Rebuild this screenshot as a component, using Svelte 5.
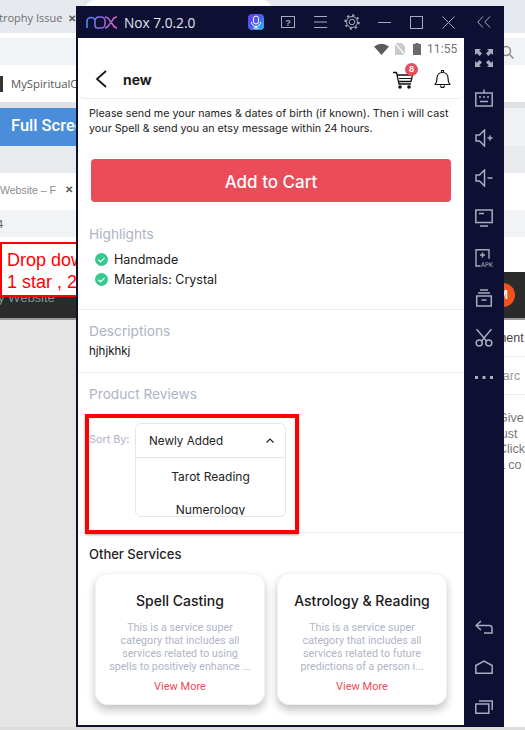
<script>
  const highlights = ['Handmade', 'Materials: Crystal'];
  const services = [
    {
      title: 'Spell Casting',
      lines: ['This is a service super', 'category that includes all', 'services related to using', 'spells to positively enhance ...']
    },
    {
      title: 'Astrology & Reading',
      lines: ['This is a service super', 'category that includes all', 'services related to future', 'predictions of a person i...']
    }
  ];
</script>

<div class="desktop">
  <!-- browser behind the emulator -->
  <div class="browser">
    <div class="tab-strip">
      <span class="tab-title">trophy Issue</span>
      <span class="tab-close">✕</span>
      <div class="active-tab"></div>
    </div>
    <div class="row gap-5"></div>
    <div class="row address">
      <svg class="search" viewBox="0 0 14 14" width="14" height="14"><circle cx="4" cy="6" r="4.500" fill="none" stroke="#8a8d91" stroke-width="1.500" /><path d="M7.500 9.500l4 4" stroke="#8a8d91" stroke-width="1.500" /></svg>
    </div>
    <div class="row bookmarks">
      <span class="favicon"></span>
      <span>MySpiritualC</span>
    </div>
    <div class="row gray-bar"></div>
    <div class="row blue-row"><div class="blue-btn">Full Scree</div></div>
    <div class="row pale"></div>
    <div class="row tab2"><span>Website – F</span><span class="tab-close small">✕</span></div>
    <div class="row num-row"><span>4</span></div>
    <div class="row white-35"></div>
    <div class="row dark-bar">
      <span class="dark-text">y Website</span>
      <span class="orange">M</span>
    </div>
    <div class="lower">
      <div class="lower-left"></div>
      <div class="lower-right">
        <div class="frag f1">ment</div>
        <div class="frag f2">earc</div>
        <div class="frag-body">
          <div>Give</div>
          <div>just</div>
          <div>Click</div>
          <div>a co</div>
        </div>
      </div>
    </div>
    <div class="drop-note">Drop dow<br />1 star , 2</div>
  </div>

  <!-- emulator window -->
  <div class="nox">
    <div class="titlebar">
      <svg class="logo" viewBox="0 0 32 14" width="32" height="14">
        <defs>
          <linearGradient id="noxg" x1="0" x2="1" y1="0" y2="0">
            <stop offset="0" stop-color="#4f8df0" />
            <stop offset="0.5" stop-color="#8d63e0" />
            <stop offset="1" stop-color="#e85fb0" />
          </linearGradient>
        </defs>
        <path d="M1 13V6.500a4 4 0 0 1 8 0V11a2.500 2.500 0 0 0 2.500 2H15a4 4 0 0 0 4-4V6a4 4 0 0 0-4-4h-2.500a4 4 0 0 0-3.500 3M19 2c3 0 4 2 5 4l2 2.500c1 1.500 2 4.500 5 4.500M31 2c-3 0-4 2-5 4l-2 2.500c-1 1.500-2 4.500-5 4.500" fill="none" stroke="url(#noxg)" stroke-width="1.600" />
      </svg>
      <span class="version">Nox 7.0.2.0</span>
      <div class="mic">
        <svg viewBox="0 0 16 16" width="16" height="16"><rect x="5.500" y="2" width="5" height="8" rx="2.500" fill="none" stroke="#fff" stroke-width="1" /><path d="M3.500 8a4.500 4.500 0 0 0 9 0M8 12.500V14M5.500 14h5" fill="none" stroke="#fff" stroke-width="1" /></svg>
      </div>
      <svg class="t-help" viewBox="0 0 14 12" width="14" height="12"><rect x="0.500" y="0.500" width="13" height="11" fill="none" stroke="#a8abbd" /><text x="7" y="9.500" text-anchor="middle" font-size="9" font-weight="700" font-family="Liberation Sans" fill="#a8abbd">?</text></svg>
      <svg class="t-menu" viewBox="0 0 13 12" width="13" height="12"><path d="M0 .5h13M0 6h13M0 11.500h13" stroke="#a8abbd" /></svg>
      <svg class="t-gear" viewBox="0 0 16 16" width="16" height="16"><circle cx="8" cy="8" r="2.800" fill="none" stroke="#a8abbd" /><circle cx="8" cy="8" r="5.500" fill="none" stroke="#a8abbd" stroke-width="1" /><circle cx="8" cy="8" r="6.800" fill="none" stroke="#a8abbd" stroke-width="1.800" stroke-dasharray="2.200 3.140" /></svg>
      <svg class="t-min" viewBox="0 0 13 12" width="13" height="12"><path d="M0 6.500h13" stroke="#a8abbd" /></svg>
      <svg class="t-max" viewBox="0 0 13 13" width="13" height="13"><rect x="0.500" y="0.500" width="12" height="12" fill="none" stroke="#a8abbd" /></svg>
      <svg class="t-close" viewBox="0 0 13 13" width="13" height="13"><path d="M.5.500l12 12M12.500.500l-12 12" stroke="#a8abbd" /></svg>
      <svg class="t-collapse" viewBox="0 0 14 12" width="14" height="12"><path d="M6 .5L.8 6 6 11.500M13 .5L7.800 6 13 11.500" fill="none" stroke="#a8abbd" /></svg>
    </div>

    <div class="nox-body">
      <div class="screen">
        <div class="status">
          <svg viewBox="0 0 15 12" width="15" height="12"><path d="M0 3.500Q7.500-2 15 3.500L7.500 12z" fill="#5a5a5a" /></svg>
          <svg class="sim" viewBox="0 0 10 12" width="10" height="12"><path d="M0 0h6.500L10 3.500V12H0z" fill="#c9c9c9" /><path d="M0 0l10 12" stroke="#fff" stroke-width="1.200" /></svg>
          <svg class="batt" viewBox="0 0 8 12" width="8" height="12"><path d="M2.500 0h3v1H8v11H0V1h2.500z" fill="#6a6a6a" /></svg>
          <span class="clock">11:55</span>
        </div>

        <header class="app-head">
          <svg class="back" viewBox="0 0 12 18" width="12" height="18"><path d="M11 1L2 9l9 8" fill="none" stroke="#1a1a1a" stroke-width="1.800" /></svg>
          <span class="head-title">new</span>
          <div class="cart">
            <svg viewBox="0 0 21 20" width="21" height="20"><path d="M0 3.500h3.500L6 15h12M4 6h15.500l-1.500 6.500H5.500" fill="none" stroke="#111" stroke-width="1.300" /><path d="M6 9.500h12.500" stroke="#111" stroke-width="1" /><circle cx="7" cy="18" r="1.800" fill="#111" /><circle cx="16" cy="18" r="1.800" fill="#111" /></svg>
            <span class="badge">8</span>
          </div>
          <svg class="bell" viewBox="0 0 17 20" width="17" height="20"><path d="M1 15.500c1.500-1.500 2-3 2-6.500 0-3 2-5.500 5.500-5.500S14 6 14 9c0 3.500.5 5 2 6.500z" fill="none" stroke="#111" stroke-width="1.200" stroke-linejoin="round" /><path d="M7.500 3.500V1.500h2v2M6.500 16.500a2 2 0 0 0 4 0" fill="none" stroke="#111" stroke-width="1.100" /></svg>
        </header>

        <p class="intro">Please send me your names &amp; dates of birth (if known). Then i will cast<br />your Spell &amp; send you an etsy message within 24 hours.</p>

        <button class="add-cart">Add to Cart</button>

        <section class="sec highlights">
          <h3 class="label">Highlights</h3>
          <ul>
            {#each highlights as item}
              <li>
                <svg viewBox="0 0 13 13" width="13" height="13"><circle cx="6.500" cy="6.500" r="6.500" fill="#35c98e" /><path d="M3.500 6.800l2.100 2 3.900-4" fill="none" stroke="#fff" stroke-width="1.200" /></svg>
                <span>{item}</span>
              </li>
            {/each}
          </ul>
        </section>

        <section class="sec descriptions">
          <h3 class="label">Descriptions</h3>
          <div class="desc-text">hjhjkhkj</div>
        </section>

        <section class="sec reviews">
          <h3 class="label">Product Reviews</h3>
          <div class="sort-row">
            <span class="sort-label">Sort By:</span>
            <div class="select">
              <div class="select-head">
                <span>Newly Added</span>
                <svg viewBox="0 0 8 5" width="8" height="5"><path d="M.5 4.500L4 1l3.500 3.500" fill="none" stroke="#222" stroke-width="1.200" /></svg>
              </div>
              <div class="options">
                <div class="option">Tarot Reading</div>
                <div class="option">Numerology</div>
              </div>
            </div>
            <div class="annotation"></div>
          </div>
        </section>

        <section class="other">
          <h3 class="other-title">Other Services</h3>
          <div class="cards">
            {#each services as s}
              <div class="card">
                <div class="card-title">{s.title}</div>
                <div class="card-desc">
                  {#each s.lines as line}
                    <div>{line}</div>
                  {/each}
                </div>
                <div class="view-more">View More</div>
              </div>
            {/each}
          </div>
        </section>
      </div>

      <aside class="side">
        <div class="side-item">
          <svg viewBox="0 0 18 18" width="18" height="18"><path d="M0 0h6L4.200 1.800 7 4.600 4.600 7 1.800 4.200 0 6zM18 0v6l-1.800-1.800L13.400 7 11 4.600l2.800-2.800L12 0zM0 18v-6l1.800 1.800L4.600 11 7 13.400l-2.800 2.800L6 18zM18 18h-6l1.800-1.800-2.800-2.800 2.400-2.400 2.800 2.800L18 12z" fill="#a8abbd" /></svg>
        </div>
        <div class="side-item">
          <svg viewBox="0 0 18 18" width="18" height="18"><path d="M9 .5V4M.8 4h16.400v13H.8z" fill="none" stroke="#a8abbd" stroke-width="1.500" /><path d="M4 8h2M8 8h2M12 8h2M5 12.500h8" stroke="#a8abbd" stroke-width="1.500" /></svg>
        </div>
        <div class="side-item">
          <svg viewBox="0 0 18 18" width="18" height="18"><path d="M1 6h3.500L9.500 1v16l-5-5H1z" fill="none" stroke="#a8abbd" stroke-width="1.500" /><path d="M12.500 9h5M15 6.500v5" stroke="#a8abbd" stroke-width="1.500" /></svg>
        </div>
        <div class="side-item">
          <svg viewBox="0 0 18 18" width="18" height="18"><path d="M1 6h3.500L9.500 1v16l-5-5H1z" fill="none" stroke="#a8abbd" stroke-width="1.500" /><path d="M12.500 9h5" stroke="#a8abbd" stroke-width="1.500" /></svg>
        </div>
        <div class="side-item">
          <svg viewBox="0 0 18 18" width="18" height="18"><path d="M.8 1h16.400v12.500H.8z" fill="none" stroke="#a8abbd" stroke-width="1.500" /><path d="M4 4.500h5M5 17h8" stroke="#a8abbd" stroke-width="1.500" /></svg>
        </div>
        <div class="side-item">
          <svg viewBox="0 0 18 18" width="18" height="18"><path d="M5.500 17H1V.8h13v9" fill="none" stroke="#a8abbd" stroke-width="1.400" /><path d="M7.500 3.500v5M5 6h5" stroke="#a8abbd" stroke-width="1.500" /><text x="6" y="17.800" font-size="6.500" font-family="DejaVu Sans Mono" fill="#a8abbd" textLength="12">APK</text></svg>
        </div>
        <div class="side-item">
          <svg viewBox="0 0 18 18" width="18" height="18"><path d="M5 1h8M3 4h12" stroke="#a8abbd" stroke-width="1.400" /><path d="M1.700 7h14.600v10H1.700zM6.500 11h5" fill="none" stroke="#a8abbd" stroke-width="1.500" /></svg>
        </div>
        <div class="side-item">
          <svg viewBox="0 0 18 18" width="18" height="18"><path d="M1.500 0l10 12M16.500 0l-10 12" fill="none" stroke="#a8abbd" stroke-width="1.500" /><circle cx="4.200" cy="14" r="3" fill="none" stroke="#a8abbd" stroke-width="1.500" /><circle cx="13.800" cy="14" r="3" fill="none" stroke="#a8abbd" stroke-width="1.500" /></svg>
        </div>
        <div class="side-item">
          <svg viewBox="0 0 18 4" width="18" height="4"><path d="M0 0h3v3H0zM7.500 0h3v3h-3zM15 0h3v3h-3z" fill="#a8abbd" /></svg>
        </div>

        <div class="side-bottom">
          <div class="side-item">
            <svg viewBox="0 0 18 14" width="18" height="14"><path d="M6 1L1 5.500 6 10M1 5.500h13.500c2 0 2.500 1.500 2.500 3V13H9" fill="none" stroke="#a8abbd" stroke-width="1.500" /></svg>
          </div>
          <div class="side-item">
            <svg viewBox="0 0 18 14" width="18" height="14"><path d="M.8 5.500L9 1l8.200 4.500v7.700H.8z" fill="none" stroke="#a8abbd" stroke-width="1.500" /></svg>
          </div>
          <div class="side-item">
            <svg viewBox="0 0 18 14" width="18" height="14"><path d="M.8 4h13v9.200H.8zM4 1h13.200v9" fill="none" stroke="#a8abbd" stroke-width="1.500" /></svg>
          </div>
        </div>
      </aside>
    </div>
  </div>
</div>

<style>
  :global(body) {
    margin: 0;
    background: #fff;
  }

  .desktop {
    position: relative;
    width: 525px;
    height: 730px;
    overflow: hidden;
    font-family: 'Liberation Sans', sans-serif;
  }

  /* browser behind */
  .browser {
    position: relative;
    display: flex;
    flex-direction: column;
    height: 730px;
    color: #5f6368;
    font-size: 13px;
    background: #dcdcdc;
  }

  .row {
    flex: none;
    display: flex;
    align-items: center;
  }

  .tab-strip {
    position: relative;
    flex: none;
    display: flex;
    align-items: center;
    height: 33px;
    background: #e6e9ed;
    font-family: 'Open Sans', sans-serif;
    font-size: 11px;
  }

  .tab-title {
    margin-left: -1px;
    padding-top: 2px;
    color: #6b6f74;
  }

  .tab-close {
    margin-left: 6px;
    padding-top: 2px;
    font-size: 10px;
    font-weight: 700;
    color: #55585c;
  }

  .active-tab {
    position: absolute;
    left: 85px;
    top: 0;
    width: 187px;
    height: 34px;
    background: #fff;
    border-radius: 10px 10px 0 0;
  }

  .gap-5 {
    height: 5px;
    background: #fff;
  }

  .address {
    height: 27px;
    background: #f1f3f4;
    justify-content: flex-end;
  }

  .search {
    margin-right: 9px;
  }

  .bookmarks {
    height: 37px;
    gap: 8px;
    background: #fff;
    font-family: 'Open Sans', sans-serif;
    font-size: 11.300px;
    color: #555;
    white-space: nowrap;
  }

  .favicon {
    width: 3px;
    height: 16px;
    background: #3a3030;
  }

  .gray-bar {
    height: 6px;
    background: #dfe1e4;
  }

  .blue-row {
    height: 38px;
    background: #eff1f4;
  }

  .blue-btn {
    width: 76px;
    height: 38px;
    padding-left: 11px;
    box-sizing: border-box;
    line-height: 36px;
    background: #4a8ed9;
    color: #fff;
    font-family: Roboto, sans-serif;
    font-size: 16.500px;
    font-weight: 500;
    white-space: nowrap;
    overflow: hidden;
  }

  .pale {
    height: 27px;
    background: #e8eaed;
  }

  .tab2 {
    height: 37px;
    padding-bottom: 4px;
    box-sizing: border-box;
    background: #fff;
    font-size: 10.500px;
    color: #8b8e93;
    white-space: nowrap;
  }

  .tab2 .small {
    position: absolute;
    left: 65px;
    margin: 0;
    padding: 0;
    font-size: 10px;
  }

  .num-row {
    height: 27px;
    background: #f1f3f4;
    font-size: 11px;
    margin-left: 0;
  }

  .num-row span {
    margin-left: -3px;
  }

  .white-35 {
    height: 35px;
    background: #fff;
  }

  .dark-bar {
    position: relative;
    height: 48px;
    background: #2b2b2b;
    border-bottom: 2px solid #9a9a9a;
    box-sizing: border-box;
  }

  .dark-text {
    position: absolute;
    left: -2px;
    top: 18px;
    color: #8d8d8d;
    font-size: 13px;
  }

  .orange {
    position: absolute;
    left: 491px;
    top: 11px;
    width: 24px;
    height: 24px;
    border-radius: 50%;
    background: #f2511b;
    color: #fff;
    font-size: 12px;
    font-weight: 700;
    line-height: 24px;
    text-align: center;
  }

  .lower {
    flex: 1;
    display: flex;
    margin-bottom: 3px;
  }

  .lower-left {
    width: 100px;
    background: #e5e5e5;
  }

  .lower-right {
    flex: 1;
    display: flex;
    flex-direction: column;
    align-items: flex-end;
    background: #fff;
    color: #666;
    font-size: 12.500px;
  }

  .frag {
    box-sizing: border-box;
    width: 100%;
    display: flex;
    align-items: center;
    padding-left: 405px;
    white-space: nowrap;
  }

  .f1 {
    height: 37px;
    border-bottom: 1px solid #eee;
    color: #444;
  }

  .f2 {
    height: 38px;
    border-bottom: 1px solid #eee;
    color: #999;
  }

  .frag-body {
    box-sizing: border-box;
    width: 100%;
    padding-left: 407px;
    padding-top: 16px;
    line-height: 15.700px;
    color: #777;
  }

  .drop-note {
    position: absolute;
    left: 0;
    top: 242px;
    box-sizing: border-box;
    width: 90px;
    height: 55px;
    padding: 5px 0 0 5px;
    border: 2px solid #f00;
    background: #fff;
    color: #f00;
    font-size: 18px;
    line-height: 22px;
    white-space: nowrap;
    overflow: hidden;
  }

  /* emulator */
  .nox {
    position: absolute;
    left: 76px;
    top: 6px;
    width: 428px;
    height: 721px;
    display: flex;
    flex-direction: column;
    background: #0e1033;
  }

  .titlebar {
    position: relative;
    flex: none;
    height: 32px;
    display: flex;
    align-items: center;
  }

  .logo {
    margin-left: 10px;
  }

  .version {
    margin-left: 6px;
    width: 72px;
    color: #e2e4ef;
    font-family: 'Open Sans', sans-serif;
    font-size: 13.700px;
    white-space: nowrap;
  }

  .mic {
    margin-left: 52px;
    width: 16px;
    height: 16px;
    border-radius: 4px;
    background: linear-gradient(135deg, #6a3df0 0%, #4a5cf0 50%, #25c8ee 100%);
  }

  .t-help {
    margin-left: 17px;
  }

  .t-menu {
    margin-left: 19px;
  }

  .t-gear {
    margin-left: 17px;
  }

  .t-min {
    margin-left: 18px;
  }

  .t-max {
    margin-left: 19px;
  }

  .t-close {
    margin-left: 19px;
  }

  .t-collapse {
    margin-left: 22px;
  }

  .nox-body {
    flex: 1;
    display: flex;
    min-height: 0;
  }

  .screen {
    flex: none;
    width: 386px;
    height: 687px;
    margin-left: 2px;
    background: #fff;
    font-family: Inter, sans-serif;
    color: #111;
  }

  .status {
    height: 22px;
    display: flex;
    align-items: center;
    padding-left: 296px;
  }

  .sim {
    margin-left: 6px;
  }

  .batt {
    margin-left: 8px;
  }

  .clock {
    margin-left: 6px;
    font-family: Roboto, sans-serif;
    font-size: 12px;
    letter-spacing: 0.1px;
    color: #757575;
  }

  .app-head {
    height: 38px;
    display: flex;
    align-items: center;
    padding: 0 13px 0 17px;
    border-bottom: 1px solid #ececec;
    border-radius: 0 0 6px 6px;
  }

  .back {
    flex: none;
  }

  .head-title {
    margin-left: 16px;
    font-size: 14px;
    font-weight: 700;
    color: #1a1a1a;
  }

  .cart {
    position: relative;
    margin-left: auto;
    height: 20px;
  }

  .badge {
    position: absolute;
    left: 12px;
    top: -6px;
    width: 13px;
    height: 13px;
    border-radius: 50%;
    background: #ea4c59;
    color: #fff;
    font-size: 8px;
    font-weight: 700;
    line-height: 13px;
    text-align: center;
  }

  .bell {
    margin-left: 20px;
  }

  .intro {
    margin: 0;
    padding: 7px 0 0 11px;
    font-size: 10.750px;
    line-height: 15px;
    white-space: nowrap;
    color: #222;
  }

  .add-cart {
    display: block;
    width: 360px;
    height: 43px;
    margin: 23px 13px 0;
    padding: 2px 0 0;
    border: 0;
    border-radius: 4px;
    background: #ea4c59;
    color: #fff;
    font-family: Inter, sans-serif;
    font-size: 17px;
    font-weight: 500;
  }

  .sec {
    padding: 0 11px;
    border-bottom: 1px solid #eceef1;
  }

  .label {
    margin: 0;
    height: 20px;
    line-height: 20px;
    font-size: 13.700px;
    font-weight: 400;
    color: #aeb3c6;
  }

  .highlights {
    padding-top: 22px;
    padding-bottom: 20px;
  }

  .highlights ul {
    margin: 5px 0 0;
    padding: 0 0 0 6px;
    list-style: none;
  }

  .highlights li {
    height: 20px;
    display: flex;
    align-items: center;
    gap: 6px;
    font-size: 12.500px;
    color: #1a1a1a;
  }

  .descriptions {
    padding-top: 11px;
    padding-bottom: 11px;
  }

  .desc-text {
    height: 20px;
    line-height: 20px;
    font-size: 11.500px;
  }

  .reviews {
    padding-top: 11px;
    padding-bottom: 15px;
  }

  .sort-row {
    position: relative;
    display: flex;
    margin-top: 19px;
  }

  .sort-label {
    width: 46px;
    padding-top: 9px;
    font-size: 10.800px;
    line-height: 16px;
    color: #aeb3c6;
  }

  .select {
    width: 151px;
    height: 94px;
    box-sizing: border-box;
    border: 1px solid #e6e6ea;
    border-radius: 6px;
    font-size: 12px;
    color: #222;
  }

  .select-head {
    height: 33px;
    display: flex;
    align-items: center;
    justify-content: space-between;
    padding: 0 11px 0 13px;
    border-bottom: 1px solid #e6e6ea;
    font-size: 11.700px;
  }

  .options {
    height: 57px;
    padding-top: 2px;
    box-sizing: border-box;
    overflow: hidden;
  }

  .option {
    height: 33px;
    line-height: 33px;
    text-align: center;
  }

  .annotation {
    position: absolute;
    left: -4px;
    top: -9px;
    width: 214px;
    height: 120px;
    box-sizing: border-box;
    border: 4px solid #f00;
    box-shadow: 0 1px 2px rgba(0, 0, 0, 0.35);
  }

  .other-title {
    margin: 0;
    padding: 11px 0 0 11px;
    height: 20px;
    line-height: 20px;
    font-size: 13px;
    font-weight: 500;
    color: #222;
  }

  .cards {
    display: flex;
    gap: 12px;
    margin-top: 9px;
    padding: 0 17px;
  }

  .card {
    width: 171px;
    height: 132px;
    box-sizing: border-box;
    padding-top: 17px;
    border: 1px solid #f2f2f4;
    border-radius: 12px;
    background: #fff;
    box-shadow: 0 5px 8px rgba(0, 0, 0, 0.24);
    text-align: center;
  }

  .card-title {
    height: 20px;
    line-height: 20px;
    font-size: 14px;
    font-weight: 500;
    color: #1a1a1a;
    white-space: nowrap;
  }

  .card-desc {
    margin-top: 10px;
    font-family: Roboto, sans-serif;
    font-size: 10.700px;
    line-height: 13px;
    color: #b0b5c7;
    white-space: nowrap;
  }

  .view-more {
    margin-top: 7px;
    font-family: Roboto, sans-serif;
    font-size: 11px;
    line-height: 14px;
    color: #ea4c59;
  }

  .side {
    flex: 1;
    display: flex;
    flex-direction: column;
  }

  .side-item {
    flex: none;
    height: 40px;
    display: flex;
    align-items: center;
    justify-content: center;
  }

  .side-bottom {
    margin-top: auto;
  }
</style>
